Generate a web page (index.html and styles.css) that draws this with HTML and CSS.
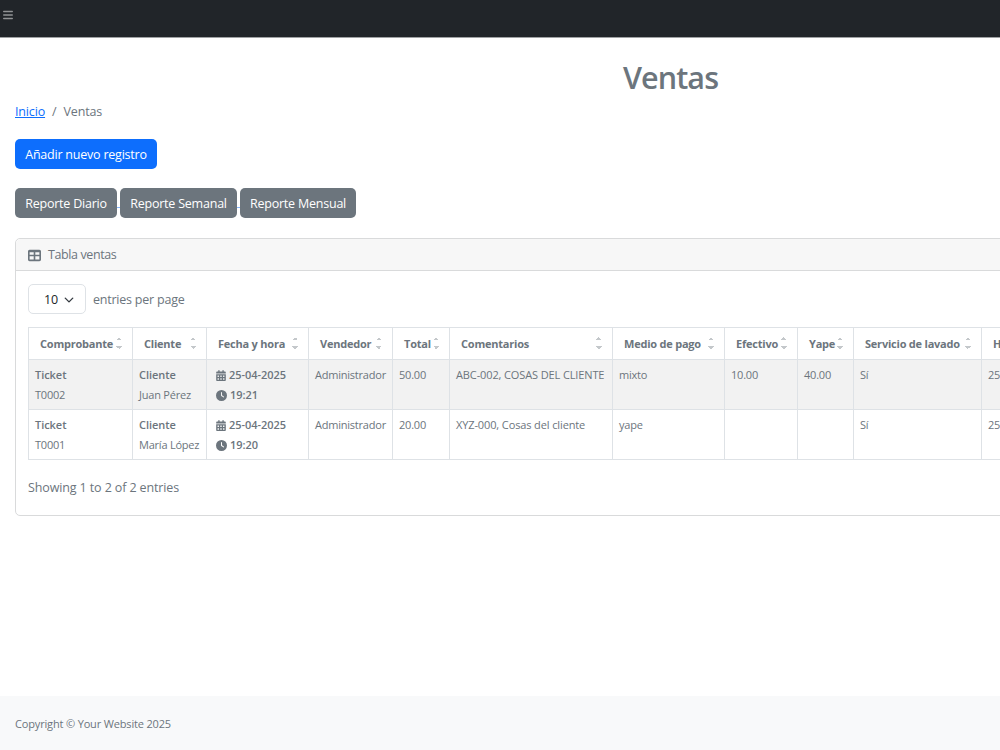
FILE: index.html
```html
<!DOCTYPE html>
<html lang="es">
<head>
  <meta charset="UTF-8">
  <title>Ventas</title>
  <link rel="stylesheet" href="styles.css">
</head>
<body>

<svg class="sprite" xmlns="http://www.w3.org/2000/svg">
  <symbol id="bars" viewBox="0 0 448 512"><path d="M0 96c0-18 14-32 32-32h384c18 0 32 14 32 32s-14 32-32 32H32c-18 0-32-14-32-32zm0 160c0-18 14-32 32-32h384c18 0 32 14 32 32s-14 32-32 32H32c-18 0-32-14-32-32zm448 160c0 18-14 32-32 32H32c-18 0-32-14-32-32s14-32 32-32h384c18 0 32 14 32 32z"/></symbol>
  <symbol id="table" viewBox="0 0 512 512"><path fill-rule="evenodd" d="M64 32h384c35 0 64 29 64 64v320c0 35-29 64-64 64H64c-35 0-64-29-64-64V96c0-35 29-64 64-64zm0 96v96h160v-96zm224 0v96h160v-96zM64 288v128h160V288zm224 0v128h160V288z"/></symbol>
  <symbol id="calendar" viewBox="0 0 448 512"><path fill-rule="evenodd" d="M128 0c18 0 32 14 32 32v32h128V32c0-18 14-32 32-32s32 14 32 32v32h48c26 0 48 22 48 48v48H0v-48c0-26 22-48 48-48h48V32c0-18 14-32 32-32zM0 192h448v272c0 26-22 48-48 48H48c-26 0-48-22-48-48zm64 64v64h64v-64zm128 0v64h64v-64zm128 0v64h64v-64zM64 384v64h64v-64zm128 0v64h64v-64zm128 0v64h64v-64z"/></symbol>
  <symbol id="clock" viewBox="0 0 512 512"><path fill-rule="evenodd" d="M256 0a256 256 0 1 1 0 512a256 256 0 1 1 0-512zm-24 120v136c0 8 4 16 11 20l96 64c11 7 26 4 33-7s4-26-7-33l-85-57V120c0-13-11-24-24-24s-24 11-24 24z"/></symbol>
</svg>

<nav class="topnav">
  <button class="toggle"><svg class="icon"><use href="#bars"/></svg></button>
</nav>

<div class="container">
  <h1>Ventas</h1>
  <ol class="breadcrumb">
    <li><a href="#">Inicio</a></li>
    <li>Ventas</li>
  </ol>

  <div class="actions">
    <a href="#" class="btn btn-primary">Añadir nuevo registro</a>
  </div>

  <div class="reports">
    <a href="#" class="btn daily">Reporte Diario</a>
    <span class="link-gap"></span>
    <a href="#" class="btn weekly">Reporte Semanal</a>
    <span class="link-gap"></span>
    <a href="#" class="btn monthly">Reporte Mensual</a>
  </div>

  <div class="card">
    <div class="card-header"><svg class="icon"><use href="#table"/></svg> <span>Tabla ventas</span></div>
    <div class="card-body">
      <div class="per-page">
        <button class="select">10
          <svg class="chevron" viewBox="0 0 16 16"><path d="m2 5 6 6 6-6"/></svg>
        </button>
        <span>entries per page</span>
      </div>

      <table>
        <colgroup>
          <col class="c-comprobante"><col class="c-cliente"><col class="c-fecha"><col class="c-vendedor">
          <col class="c-total"><col class="c-comentarios"><col class="c-medio"><col class="c-efectivo">
          <col class="c-yape"><col class="c-servicio"><col>
        </colgroup>
        <thead>
          <tr>
            <th><div class="sorter">Comprobante</div></th>
            <th><div class="sorter">Cliente</div></th>
            <th><div class="sorter">Fecha y hora</div></th>
            <th><div class="sorter">Vendedor</div></th>
            <th><div class="sorter">Total</div></th>
            <th><div class="sorter">Comentarios</div></th>
            <th><div class="sorter">Medio de pago</div></th>
            <th><div class="sorter">Efectivo</div></th>
            <th><div class="sorter">Yape</div></th>
            <th><div class="sorter">Servicio de lavado</div></th>
            <th><div class="sorter">H</div></th>
          </tr>
        </thead>
        <tbody>
          <tr>
            <td><p class="strong">Ticket</p><p>T0002</p></td>
            <td><p class="strong">Cliente</p><p>Juan Pérez</p></td>
            <td class="date">
              <p class="strong"><svg class="icon cal"><use href="#calendar"/></svg>25-04-2025</p>
              <p class="strong"><svg class="icon"><use href="#clock"/></svg>19:21</p>
            </td>
            <td>Administrador</td>
            <td>50.00</td>
            <td class="comment">ABC-002, COSAS DEL CLIENTE</td>
            <td>mixto</td>
            <td>10.00</td>
            <td>40.00</td>
            <td>Sí</td>
            <td>25</td>
          </tr>
          <tr>
            <td><p class="strong">Ticket</p><p>T0001</p></td>
            <td><p class="strong">Cliente</p><p>María López</p></td>
            <td class="date">
              <p class="strong"><svg class="icon cal"><use href="#calendar"/></svg>25-04-2025</p>
              <p class="strong"><svg class="icon"><use href="#clock"/></svg>19:20</p>
            </td>
            <td>Administrador</td>
            <td>20.00</td>
            <td class="comment">XYZ-000, Cosas del cliente</td>
            <td>yape</td>
            <td></td>
            <td></td>
            <td>Sí</td>
            <td>25</td>
          </tr>
        </tbody>
      </table>

      <div class="info">Showing 1 to 2 of 2 entries</div>
    </div>
  </div>
</div>

<footer>Copyright &copy; Your Website 2025</footer>

</body>
</html>
```

FILE: styles.css
```css
* { margin: 0; padding: 0; box-sizing: border-box; }

html { overflow: hidden; }

body {
  width: 1341px;
  height: 750px;
  display: flex;
  flex-direction: column;
  overflow: hidden;
  font-family: "Segoe UI", "Open Sans", "Noto Sans", sans-serif;
  font-size: 12.5px;
  line-height: 20px;
  letter-spacing: -0.22px;
  color: #6c757d;
  background: #fff;
}

.sprite { display: none; }

.icon {
  width: 13px;
  height: 13px;
  fill: currentColor;
}

a { color: #0d6efd; }

button { font: inherit; letter-spacing: inherit; }

/* Top bar */
.topnav {
  flex: none;
  height: 38px;
  background: #212529;
  border-bottom: 1px solid #9fa1a3;
}

.toggle {
  display: flex;
  margin: 9px 0 0 3px;
  background: none;
  border: none;
  color: #909294;
}

.toggle .icon { width: 10px; height: 12px; }

/* Content */
.container {
  flex: 1;
  padding: 20px 15px 0;
}

h1 {
  height: 39px;
  line-height: 38px;
  font-size: 30.5px;
  font-weight: 600;
  letter-spacing: -0.9px;
  text-align: center;
}

.breadcrumb {
  display: flex;
  list-style: none;
  margin: 5px 0 17px;
  letter-spacing: -0.15px;
}

.breadcrumb li + li::before {
  content: "/";
  padding: 0 7px;
}

.actions { display: flex; margin-bottom: 19px; }

.btn {
  height: 30px;
  padding-top: 1px;
  line-height: 30px;
  border-radius: 5px;
  background: #6c757d;
  color: #fff;
  text-align: center;
  text-decoration: none;
}

.btn-primary { width: 142px; background: #0d6efd; }

.reports {
  display: flex;
  margin-bottom: 20px;
}

/* underlined space between two links */
.link-gap {
  width: 3px;
  height: 20px;
  border-bottom: 1px solid #86b7fe;
}

.daily { width: 102px; }
.weekly { width: 117px; }
.monthly { width: 116px; }

/* Card */
.card {
  height: 278px;
  border: 1px solid #d9dadb;
  border-radius: 5px;
}

.card-header {
  display: flex;
  align-items: center;
  gap: 7px;
  height: 32px;
  padding: 1px 12px 0;
  background: #f7f7f7;
  border-bottom: 1px solid #d9dadb;
  border-radius: 5px 5px 0 0;
}

.card-header span { letter-spacing: -0.4px; }

.card-body { padding: 13px 13px 13px 12px; }

.per-page {
  display: flex;
  align-items: center;
  gap: 7px;
  margin-bottom: 13px;
}

.per-page span { padding-top: 1px; }

.select {
  display: flex;
  align-items: center;
  gap: 6px;
  width: 58px;
  height: 30px;
  padding: 1px 0 0 15px;
  border: 1px solid #dee2e6;
  border-radius: 5px;
  background: #fff;
  color: #212529;
}

.chevron {
  width: 10px;
  height: 10px;
  fill: none;
  stroke: #343a40;
  stroke-width: 2.2;
  stroke-linecap: round;
  stroke-linejoin: round;
}

/* Table */
table {
  width: 1286px;
  table-layout: fixed;
  border-collapse: collapse;
  font-size: 11px;
}

.c-comprobante { width: 104px; }
.c-cliente { width: 74px; }
.c-fecha { width: 102px; }
.c-vendedor { width: 84px; }
.c-total { width: 57px; }
.c-comentarios { width: 163px; }
.c-medio { width: 112px; }
.c-efectivo { width: 73px; }
.c-yape { width: 56px; }
.c-servicio { width: 128px; }

th, td {
  border: 1px solid #dee2e6;
  text-align: left;
  vertical-align: top;
  white-space: nowrap;
}

th { height: 32px; padding: 6px 10px 0 11px; }

td { height: 50px; padding: 5px 0 4px 6px; }

td.comment { letter-spacing: -0.12px; }

.strong { font-weight: 600; letter-spacing: -0.05px; }

tbody tr:first-child { background: #f2f2f2; }

.sorter {
  display: flex;
  align-items: center;
  justify-content: space-between;
}

.sorter::after {
  content: "";
  width: 6px;
  height: 12px;
  margin-top: -2px;
  background:
    conic-gradient(from 135deg at 50% 0, #c4c8cb 90deg, transparent 0) top / 6px 3px no-repeat,
    conic-gradient(from -45deg at 50% 100%, #c4c8cb 90deg, transparent 0) bottom / 6px 3px no-repeat;
}

td.date { padding-left: 9px; }

.date p {
  display: flex;
  align-items: center;
  gap: 3px;
}

.date .icon { width: 11px; height: 11px; }
.date .cal { width: 10px; }

.info { margin-top: 18px; letter-spacing: -0.12px; }

footer {
  flex: none;
  height: 54px;
  padding-left: 15px;
  line-height: 55px;
  font-size: 11px;
  letter-spacing: -0.16px;
  background: #f8f9fa;
}
```
